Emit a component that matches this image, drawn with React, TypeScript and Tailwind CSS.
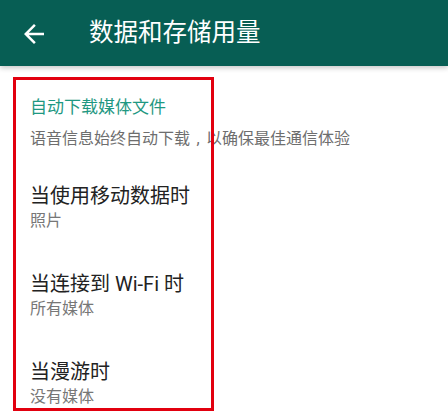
import React from "react";

const font = { fontFamily: 'Roboto, "Noto Sans CJK SC", sans-serif' };

const items = [
  { title: "当使用移动数据时", sub: "照片" },
  { title: "当连接到 Wi-Fi 时", sub: "所有媒体" },
  { title: "当漫游时", sub: "没有媒体" },
];

export default function App() {
  return (
    <div
      className="relative w-[448px] h-[417px] overflow-hidden bg-white"
      style={font}
    >
      <header className="relative z-10 h-[66px] bg-[#075e54] flex items-center shadow-[0_2px_5px_rgba(0,0,0,0.22)]">
        <div className="ml-[19px] w-[30px] h-[30px] flex items-center justify-center mt-[2px]">
          <svg width="30" height="30" viewBox="0 0 24 24" fill="#ffffff">
            <path d="M20 11H7.83l5.59-5.59L12 4l-8 8 8 8 1.41-1.41L7.83 13H20v-2z" />
          </svg>
        </div>
        <h1 className="ml-[40px] text-[24.5px] leading-[32px] text-white font-normal">
          数据和存储用量
        </h1>
      </header>

      <main className="pt-[29px] pl-[30px]">
        <div className="text-[17px] leading-[24px] text-[#1f9882]">
          自动下载媒体文件
        </div>
        <div className="mt-[9px] text-[16px] leading-[22px] text-[#6e6e6e]">
          语音信息始终自动下载
          <span className="inline-block w-[16px] text-center">,</span>
          以确保最佳通信体验
        </div>
        <div className="mt-[13px] flex flex-col">
          {items.map((it) => (
            <div key={it.title} className="h-[88px] flex flex-col justify-center">
              <div className="text-[20px] leading-[28px] text-[#222222]">
                {it.title}
              </div>
              <div className="text-[16px] leading-[22px] text-[#777777]">
                {it.sub}
              </div>
            </div>
          ))}
        </div>
      </main>

      <div className="absolute left-[13px] top-[77px] w-[201px] h-[334px] border-[3px] border-[#e2000f] pointer-events-none" />
    </div>
  );
}
